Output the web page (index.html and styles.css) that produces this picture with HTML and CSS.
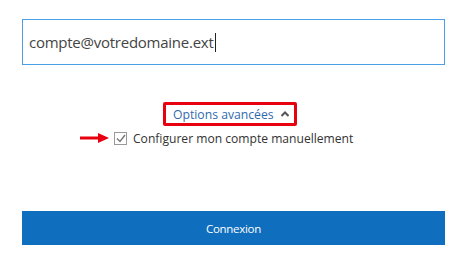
FILE: index.html
```html
<!DOCTYPE html>
<html lang="fr">
<head>
    <meta charset="UTF-8">
    <title>Connexion</title>
    <link rel="stylesheet" href="styles.css">
</head>
<body>
    <div class="container">
        <div class="email-field">
            <span class="email-text">compte@votredomaine.ext</span><span class="caret"></span>
        </div>

        <div class="advanced">
            <a class="advanced-link" href="#">Options avancées
                <svg class="chevron" width="8" height="6" viewBox="0 0 8 6"><path d="M0.5 5 L4 1.5 L7.5 5" fill="none" stroke="#555" stroke-width="2"/></svg>
            </a>
        </div>

        <div class="manual">
            <svg class="arrow" width="30" height="10" viewBox="0 0 30 10"><path d="M0 5 H20" stroke="#e8000f" stroke-width="3"/><path d="M18 0 L29 5 L18 10 Z" fill="#e8000f"/></svg>
            <span class="checkbox">
                <svg width="10" height="9" viewBox="0 0 10 9"><path d="M1 4.5 L4 7.5 L9 1" fill="none" stroke="#777" stroke-width="1.4"/></svg>
            </span>
            <span class="manual-label">Configurer mon compte manuellement</span>
        </div>

        <button class="connect" type="button">Connexion</button>
    </div>
</body>
</html>
```

FILE: styles.css
```css
body {
    margin: 0;
    background-color: #fff;
    font-family: "Open Sans", "Noto Sans", sans-serif;
    color: #333;
}
.container {
    width: 423px;
    padding: 19px 0 0 22px;
}
.email-field {
    height: 46px;
    box-sizing: border-box;
    border: 1px solid #4a9fe6;
    padding: 0 0 0 6px;
    display: flex;
    align-items: center;
}
.email-text {
    font-size: 15px;
    color: #444;
    letter-spacing: -0.25px;
}
.caret {
    display: inline-block;
    width: 1px;
    height: 19px;
    background-color: #222;
    margin-left: 1px;
}
.advanced {
    display: flex;
    margin-top: 37px;
    margin-left: 141px;
}
.advanced-link {
    display: flex;
    align-items: center;
    gap: 7px;
    width: 134px;
    height: 24px;
    box-sizing: border-box;
    padding: 0 0 0 7px;
    border: 3px solid #e8000f;
    border-radius: 2px;
    color: #2f6aae;
    font-size: 12.2px;
    text-decoration: none;
}
.manual {
    display: flex;
    align-items: center;
    margin-top: 2px;
    margin-left: 58px;
    height: 20px;
}
.arrow {
    margin-right: 4px;
}
.checkbox {
    width: 11px;
    height: 11px;
    border: 1px solid #999;
    display: flex;
    align-items: center;
    justify-content: center;
    margin-right: 6px;
}
.manual-label {
    font-size: 12.1px;
    color: #333;
}
.connect {
    display: block;
    width: 423px;
    height: 34px;
    margin-top: 63px;
    border: none;
    background-color: #106ebe;
    color: #fff;
    font-family: "Open Sans", "Noto Sans", sans-serif;
    font-size: 11.5px;
    letter-spacing: -0.3px;
}
```
